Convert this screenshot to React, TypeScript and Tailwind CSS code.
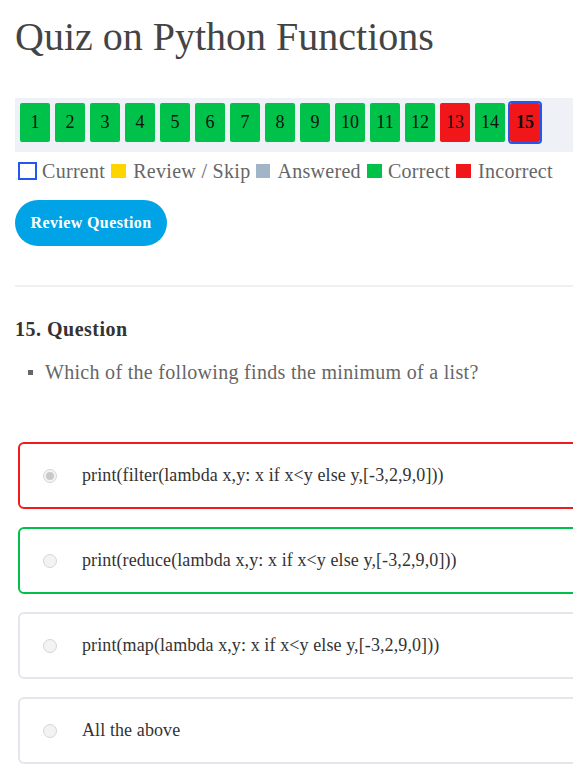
const nums = [
  { n: 1, s: 'ok' }, { n: 2, s: 'ok' }, { n: 3, s: 'ok' }, { n: 4, s: 'ok' }, { n: 5, s: 'ok' },
  { n: 6, s: 'ok' }, { n: 7, s: 'ok' }, { n: 8, s: 'ok' }, { n: 9, s: 'ok' }, { n: 10, s: 'ok' },
  { n: 11, s: 'ok' }, { n: 12, s: 'ok' }, { n: 13, s: 'bad' }, { n: 14, s: 'ok' }, { n: 15, s: 'cur' },
];

const options = [
  { text: 'print(filter(lambda x,y: x if x<y else y,[-3,2,9,0]))', border: 'border-[#ee1c1c]', checked: true },
  { text: 'print(reduce(lambda x,y: x if x<y else y,[-3,2,9,0]))', border: 'border-[#00c04b]', checked: false },
  { text: 'print(map(lambda x,y: x if x<y else y,[-3,2,9,0]))', border: 'border-[#e3e6eb]', checked: false },
  { text: 'All the above', border: 'border-[#e3e6eb]', checked: false },
];

function Radio({ checked }: { checked: boolean }) {
  return (
    <span className="flex h-[14px] w-[14px] shrink-0 items-center justify-center rounded-full border border-[#d6d6d6] bg-[#f3f3f3]">
      {checked && <span className="h-[8px] w-[8px] rounded-full bg-[#c9c9c9]" />}
    </span>
  );
}

export default function App() {
  return (
    <div className="h-[770px] w-full overflow-hidden bg-white font-['Liberation_Serif',serif]">
      <div className="w-[640px] pl-[15px] pt-[13px]">
        <h1 className="text-[40px] leading-[48px] text-[#444]">Quiz on Python Functions</h1>

        <div className="mt-[37px] flex gap-[5px] bg-[#eef2f6] pl-[5px] pt-[5px] pb-[10px]">
          {nums.map(({ n, s }) => (
            <div
              key={n}
              className={
                s === 'ok'
                  ? 'flex h-[39px] w-[30px] items-center justify-center rounded-[2px] bg-[#00c24a] text-[18px] text-[#111]'
                  : s === 'bad'
                  ? 'flex h-[39px] w-[30px] items-center justify-center rounded-[2px] bg-[#f1161a] text-[18px] text-[#111]'
                  : 'flex h-[39px] w-[30px] items-center justify-center rounded-[2px] bg-[#f1161a] text-[18px] font-bold text-[#111] outline-2 outline-[#2357ee]'
              }
            >
              {n}
            </div>
          ))}
        </div>

        <div className="mt-[10px] flex h-[18px] items-center text-[20px] tracking-[0.3px] text-[#666]">
          <span className="ml-[3px] h-[18px] w-[19px] border-2 border-[#2357ee]" />
          <span className="ml-[5px]">Current</span>
          <span className="ml-[6px] h-[14px] w-[15px] bg-[#ffd500]" />
          <span className="ml-[7px]">Review / Skip</span>
          <span className="ml-[6px] h-[14px] w-[14px] bg-[#a2b4c8]" />
          <span className="ml-[7px]">Answered</span>
          <span className="ml-[6px] h-[14px] w-[15px] bg-[#00c24a]" />
          <span className="ml-[6px]">Correct</span>
          <span className="ml-[6px] h-[14px] w-[15px] bg-[#f1161a]" />
          <span className="ml-[7px]">Incorrect</span>
        </div>

        <button className="mt-[20px] h-[46px] w-[152px] rounded-[23px] bg-[#00a3e5] text-[16px] font-bold tracking-[0.4px] text-white">
          Review Question
        </button>

        <div className="mt-[39px] h-[2px] bg-[#eef0f4]" />

        <h2 className="mt-[30px] text-[20px] font-bold leading-[24px] tracking-[0.5px] text-[#333]">15. Question</h2>

        <ul className="mt-[19px] pl-[13px]">
          <li className="flex items-center text-[20px] leading-[24px] tracking-[0.3px] text-[#666]">
            <span className="h-[5px] w-[5px] bg-[#666]" />
            <span className="ml-[12px]">Which of the following finds the minimum of a list?</span>
          </li>
        </ul>

        <div className="mt-[58px] flex flex-col gap-[18px] pl-[3px]">
          {options.map((o) => (
            <label
              key={o.text}
              className={`flex h-[67px] items-center rounded-[6px] border-2 ${o.border} pl-[23px] text-[18px] tracking-[0.1px] text-[#333]`}
            >
              <Radio checked={o.checked} />
              <span className="ml-[25px]">{o.text}</span>
            </label>
          ))}
        </div>
      </div>
    </div>
  );
}
